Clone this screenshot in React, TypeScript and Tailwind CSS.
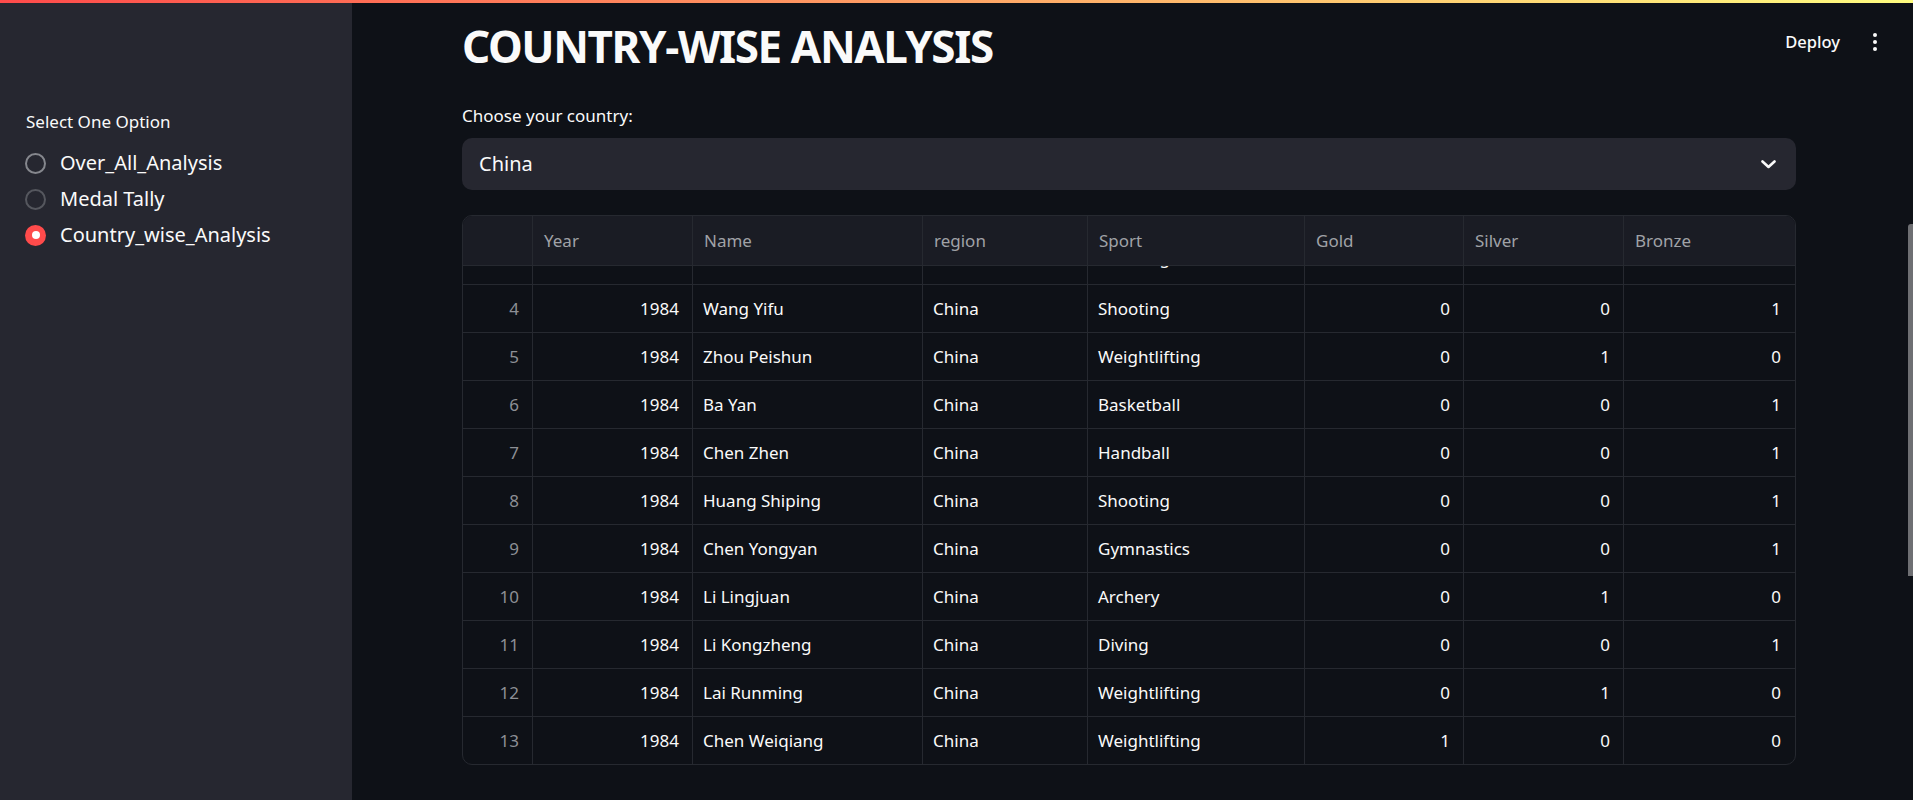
import React from "react";

type Row = [number, string, string, string, number, number, number];

const rows: Row[] = [
  [0, "Li Ning", "China", "Gymnastics", 1, 0, 0],
  [1, "Lou Yun", "China", "Gymnastics", 1, 0, 0],
  [2, "Tong Fei", "China", "Gymnastics", 0, 1, 0],
  [3, "Wu Xiaoxuan", "China", "Shooting", 1, 0, 0],
  [4, "Wang Yifu", "China", "Shooting", 0, 0, 1],
  [5, "Zhou Peishun", "China", "Weightlifting", 0, 1, 0],
  [6, "Ba Yan", "China", "Basketball", 0, 0, 1],
  [7, "Chen Zhen", "China", "Handball", 0, 0, 1],
  [8, "Huang Shiping", "China", "Shooting", 0, 0, 1],
  [9, "Chen Yongyan", "China", "Gymnastics", 0, 0, 1],
  [10, "Li Lingjuan", "China", "Archery", 0, 1, 0],
  [11, "Li Kongzheng", "China", "Diving", 0, 0, 1],
  [12, "Lai Runming", "China", "Weightlifting", 0, 1, 0],
  [13, "Chen Weiqiang", "China", "Weightlifting", 1, 0, 0],
];

const cols = "grid grid-cols-[70px_160px_230px_165px_217px_159px_160px_168px]";
const cell = "flex items-center border-r border-[#262930] h-full";

function Radio({ label, state }: { label: string; state: "on" | "light" | "dark" }) {
  return (
    <div className="flex h-9 items-center gap-[14px]">
      {state === "on" ? (
        <div className="flex h-[21px] w-[21px] items-center justify-center rounded-full bg-[#ff4b4b]">
          <div className="h-2 w-2 rounded-full bg-white" />
        </div>
      ) : (
        <div
          className={
            state === "light"
              ? "h-[21px] w-[21px] rounded-full border-2 border-[#85878d]"
              : "h-[21px] w-[21px] rounded-full border-2 border-[#55575e]"
          }
        />
      )}
      <span className="text-[20px] leading-6 text-[#fafafa]">{label}</span>
    </div>
  );
}

export default function App() {
  return (
    <div className="relative flex h-[800px] w-full overflow-hidden bg-[#0e1117] font-['Noto_Sans',sans-serif] text-[#fafafa]">
      <div className="absolute left-0 right-0 top-0 z-10 h-[3px] bg-[linear-gradient(90deg,#ff4b4b,#fffd80)]" />

      {/* Sidebar */}
      <aside className="flex w-[352px] shrink-0 flex-col bg-[#262730] pl-[25px] pt-[110px]">
        <div className="pl-[1px] text-[17px] leading-6">Select One Option</div>
        <div className="mt-[11px] flex flex-col">
          <Radio label="Over_All_Analysis" state="light" />
          <Radio label="Medal Tally" state="dark" />
          <Radio label="Country_wise_Analysis" state="on" />
        </div>
      </aside>

      {/* Main */}
      <main className="flex min-w-0 flex-1 flex-col pl-[110px] pr-[117px] pt-[20px]">
        <h1 className="text-[44px] font-bold leading-[52px] tracking-[-1.4px]">COUNTRY-WISE ANALYSIS</h1>

        <div className="mt-[32px] text-[17px] leading-6">Choose your country:</div>

        <div className="mt-[10px] flex h-[52px] items-center justify-between rounded-[10px] bg-[#262730] pl-[17px] pr-[20px]">
          <span className="text-[20px]">China</span>
          <svg width="15" height="9" viewBox="0 0 15 9" fill="none">
            <path d="M1.5 1.5 L7.5 7 L13.5 1.5" stroke="#fafafa" strokeWidth="2.6" strokeLinecap="round" strokeLinejoin="round" />
          </svg>
        </div>

        <div className="mt-[25px] overflow-hidden rounded-[10px] border border-[#262930] text-[17px]">
          {/* header */}
          <div className={`${cols} relative z-10 h-[50px] border-b border-[#262930] bg-[#1a1c24] text-[#a0a2a7]`}>
            <div className={cell} />
            {["Year", "Name", "region", "Sport", "Gold", "Silver", "Bronze"].map((h, i) => (
              <div key={h} className={`${cell} pl-[11px] ${i === 6 ? "border-r-0" : ""}`}>
                {h}
              </div>
            ))}
          </div>
          {/* body */}
          <div className="h-[498px] overflow-hidden">
            <div className="mt-[-173px]">
              {rows.map((r) => {
                const lift = r[0] === 3 ? "pb-[5px]" : "";
                return (
                  <div key={r[0]} className={`${cols} h-[48px] border-b border-[#262930]`}>
                    <div className={`${cell} ${lift} justify-end pr-[13px] text-[#8d8f95]`}>{r[0]}</div>
                    <div className={`${cell} ${lift} justify-end pr-[13px]`}>1984</div>
                    <div className={`${cell} ${lift} pl-[10px]`}>{r[1]}</div>
                    <div className={`${cell} ${lift} pl-[10px]`}>{r[2]}</div>
                    <div className={`${cell} ${lift} pl-[10px]`}>{r[3]}</div>
                    <div className={`${cell} ${lift} justify-end pr-[13px]`}>{r[4]}</div>
                    <div className={`${cell} ${lift} justify-end pr-[13px]`}>{r[5]}</div>
                    <div className={`${cell} ${lift} justify-end border-r-0 pr-[11px]`}>{r[6]}</div>
                  </div>
                );
              })}
            </div>
          </div>
        </div>
      </main>

      {/* Header overlay */}
      <div className="absolute right-[36px] top-[28px] flex items-center gap-[33px]">
        <span className="text-[16.5px] font-medium leading-7">Deploy</span>
        <div className="flex flex-col items-center gap-[3px]">
          <div className="h-1 w-1 rounded-full bg-[#fafafa]" />
          <div className="h-1 w-1 rounded-full bg-[#fafafa]" />
          <div className="h-1 w-1 rounded-full bg-[#fafafa]" />
        </div>
      </div>

      {/* Page scrollbar */}
      <div className="absolute right-0 top-[224px] h-[352px] w-[5px] rounded-tl-[3px] bg-[#6e6f73]" />
    </div>
  );
}
